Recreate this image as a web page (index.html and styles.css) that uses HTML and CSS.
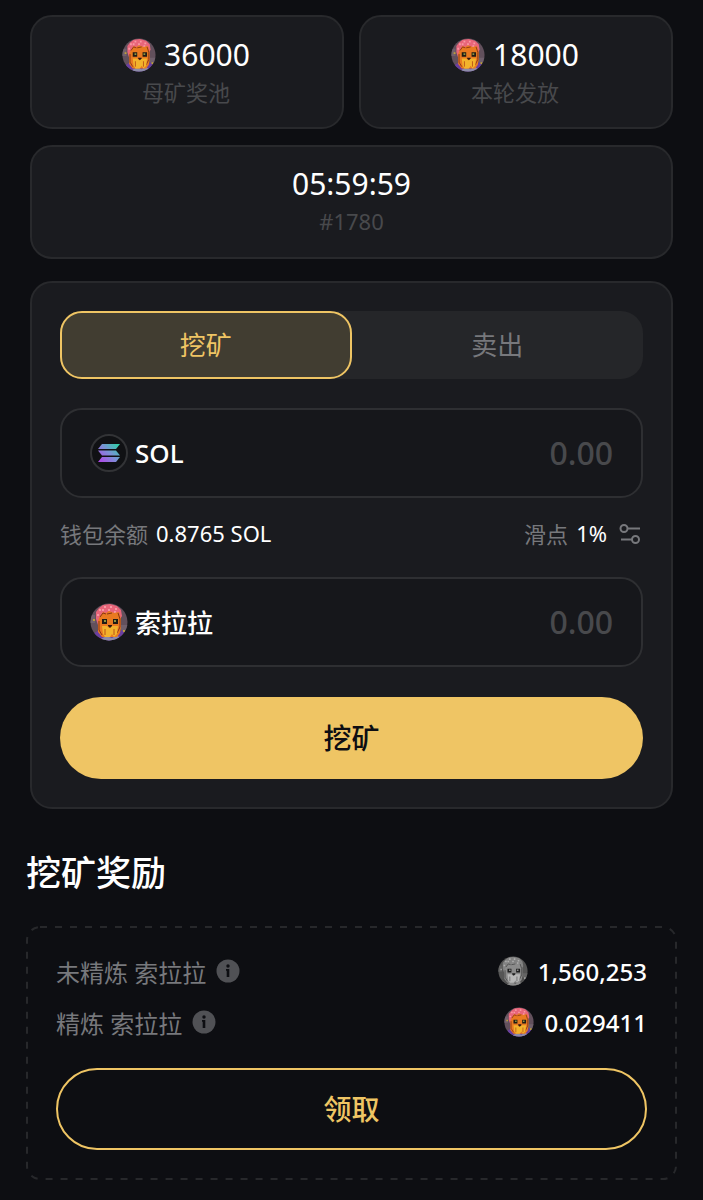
FILE: index.html
```html
<!DOCTYPE html>
<html lang="zh-CN">
<head>
<meta charset="utf-8">
<meta name="viewport" content="width=device-width, initial-scale=1">
<title>挖矿</title>
<link rel="stylesheet" href="styles.css">
</head>
<body>
<svg class="defs" aria-hidden="true">
  <defs>
    <linearGradient id="sol-fill" gradientUnits="userSpaceOnUse" x1="28" y1="10" x2="10" y2="28">
      <stop offset="0" stop-color="#2fd0a8"/>
      <stop offset="0.5" stop-color="#7c8fd6"/>
      <stop offset="1" stop-color="#b048e8"/>
    </linearGradient>
    <clipPath id="coin-clip"><circle cx="19" cy="19" r="18.5"/></clipPath>
    <symbol id="coin" viewBox="0 0 38 38">
      <g clip-path="url(#coin-clip)">
        <rect width="38" height="38" fill="#62505c"/>
        <path d="M0 12h5v8H0zM31 22h7v8h-7z" fill="#70606c"/>
        <path d="M3 31l6-4 5 3h12l6-3 4 5-8 8H8z" fill="#6a3fa0"/>
        <path d="M11 36l5-3 6 2 5-3 3 3-6 4H14z" fill="#8c8ba8"/>
        <path d="M6 16V9l3-4 4-3 7-1 7 2 4 4 1 6-3 5H9l-1 4z" fill="#e8657a"/>
        <path d="M9 7h2M14 4h2M20 4h2M25 6h2M7 12h2M12 7h2M18 7h2M24 9h2" stroke="#f798a2" stroke-width="2"/>
        <path d="M10 13l3-4 3 1 3-2 5 2 5-1 2 7v8l-1 6-3 4H12l-4-5V18z" fill="#e97a20"/>
        <path d="M10 14l3-4 3 1M28 10l2 6v8l-3 6M9 18v9l3 5M17 11l5-1" fill="none" stroke="#8a3516" stroke-width="1"/>
        <path d="M12 23h5l2 2 3-2h6l-1 8-3 3-2-3-2 3h-5l-2-3z" fill="#f3b32c"/>
        <path d="M15 26v6M24 26v6" stroke="#b95218" stroke-width="1"/>
        <path d="M12 16h5v5h-5zM23 16h5v5h-5z" fill="#211c15"/>
        <path d="M14 17h2v2h-2zM24 17h2v2h-2z" fill="#8f9440"/>
        <path d="M18 22h4v1l-2 2-2-2z" fill="#301812"/>
        <path d="M3 16h2v2H3zM33 27h2v2h-2z" fill="#bfa039"/>
      </g>
    </symbol>
    <symbol id="info" viewBox="0 0 24 24">
      <circle cx="12" cy="12" r="11.500" fill="#505155"/>
      <circle cx="12" cy="7" r="1.700" fill="#0d0e12"/>
      <path d="M10 10h3.300v8h-2.600v-6.200H10z" fill="#0d0e12"/>
    </symbol>
  </defs>
</svg>

<main class="page">
  <section class="stats">
    <div class="card">
      <div class="card-value"><svg class="coin" aria-hidden="true"><use href="#coin"/></svg>36000</div>
      <div class="card-label">母矿奖池</div>
    </div>
    <div class="card">
      <div class="card-value"><svg class="coin" aria-hidden="true"><use href="#coin"/></svg>18000</div>
      <div class="card-label">本轮发放</div>
    </div>
    <div class="card card-wide">
      <div class="card-value">05:59:59</div>
      <div class="card-label">#1780</div>
    </div>
  </section>

  <section class="panel">
    <div class="tabs" role="tablist">
      <button class="tab tab-active" type="button" role="tab" aria-selected="true">挖矿</button>
      <button class="tab" type="button" role="tab" aria-selected="false">卖出</button>
    </div>

    <div class="field">
      <label class="field-label" for="pay">
        <svg class="token" viewBox="0 0 38 38" aria-hidden="true">
          <circle cx="19" cy="19" r="18" fill="#101114" stroke="#323336" stroke-width="2"/>
          <g fill="url(#sol-fill)">
            <path d="M12 10h18l-4 5H8z"/>
            <path d="M8 16.500h18l4 5H12z"/>
            <path d="M12 23h18l-4 5H8z"/>
          </g>
        </svg>
        SOL
      </label>
      <input class="amount" id="pay" type="text" inputmode="decimal" placeholder="0.00">
    </div>

    <div class="meta">
      <div class="meta-group"><span class="muted">钱包余额</span><span>0.8765 SOL</span></div>
      <div class="meta-group">
        <span class="muted">滑点</span><span>1%</span>
        <button class="icon-button" type="button" aria-label="滑点设置">
          <svg class="sliders" viewBox="0 0 22 22" fill="none" stroke="#77787c" stroke-width="2" aria-hidden="true">
            <circle cx="5" cy="5.500" r="3.500"/><path d="M9 5.500h12"/>
            <circle cx="16.500" cy="16.500" r="3.500"/><path d="M2 16.500h11"/>
          </svg>
        </button>
      </div>
    </div>

    <div class="field">
      <label class="field-label" for="receive">
        <svg class="token" aria-hidden="true"><use href="#coin"/></svg>
        索拉拉
      </label>
      <input class="amount" id="receive" type="text" inputmode="decimal" placeholder="0.00">
    </div>

    <button class="action action-solid" type="button">挖矿</button>
  </section>

  <section class="rewards">
    <h2 class="rewards-title">挖矿奖励</h2>
    <div class="rewards-box">
      <svg class="dashes" aria-hidden="true"><rect class="dash-line" x="1" y="1" rx="13"/></svg>
      <div class="reward">
        <div class="reward-name">未精炼 索拉拉
          <button class="icon-button" type="button" aria-label="未精炼说明"><svg class="info" aria-hidden="true"><use href="#info"/></svg></button>
        </div>
        <div class="reward-value"><svg class="coin-small coin-grey" aria-hidden="true"><use href="#coin"/></svg>1,560,253</div>
      </div>
      <div class="reward">
        <div class="reward-name">精炼 索拉拉
          <button class="icon-button" type="button" aria-label="精炼说明"><svg class="info" aria-hidden="true"><use href="#info"/></svg></button>
        </div>
        <div class="reward-value"><svg class="coin-small" aria-hidden="true"><use href="#coin"/></svg>0.029411</div>
      </div>
      <button class="action action-outline" type="button">领取</button>
    </div>
  </section>
</main>
</body>
</html>
```
FILE: styles.css
```css
:root {
  --bg: #0d0e12;
  --card: #1a1b1f;
  --line: #28292c;
  --gold: #efc564;
  --muted: #77787c;
  --faint: #48494c;
}

* {
  box-sizing: border-box;
}

body {
  margin: 0;
  background: var(--bg);
  color: #fff;
  font-family: "Noto Sans", "Noto Sans CJK SC", sans-serif;
  font-size: 22px;
}

button,
input {
  margin: 0;
  padding: 0;
  border: 0;
  background: none;
  color: inherit;
  font: inherit;
}

button {
  cursor: pointer;
}

svg {
  display: block;
  flex: none;
}

.defs {
  position: absolute;
  width: 0;
  height: 0;
}

.page {
  padding: 15px 26px 20px;
}

.stats {
  display: grid;
  grid-template-columns: 1fr 1fr;
  gap: 16px 15px;
  margin: 0 4px 22px;
}

.card {
  padding: 18px 18px 18px 16px;
  border: 2px solid var(--line);
  border-radius: 22px;
  background: var(--card);
  text-align: center;
}

.card-wide {
  grid-column: 1 / -1;
  padding: 17px 16px 19px;
}

.card-value {
  display: flex;
  align-items: center;
  justify-content: center;
  gap: 8px;
  font-size: 30px;
  line-height: 40px;
}

.card-label {
  color: var(--faint);
  line-height: 34px;
}

.coin {
  width: 34px;
  height: 34px;
}

.panel {
  margin: 0 4px;
  padding: 28px;
  border: 2px solid var(--line);
  border-radius: 22px;
  background: var(--card);
}

.tabs {
  display: grid;
  grid-template-columns: 1fr 1fr;
  margin-bottom: 29px;
  border-radius: 22px;
  background: #252629;
}

.tab {
  height: 68px;
  padding-bottom: 2px;
  border-radius: 22px;
  color: var(--muted);
  font-size: 26px;
}

.tab-active {
  border: 2px solid var(--gold);
  background: #413d31;
  color: var(--gold);
}

.field {
  display: flex;
  align-items: center;
  justify-content: space-between;
  gap: 16px;
  height: 90px;
  padding: 0 28px;
  border: 2px solid #2e2f32;
  border-radius: 22px;
  background: #16171b;
}

.field-label {
  display: flex;
  align-items: center;
  gap: 7px;
  font-size: 26px;
  font-weight: 500;
  white-space: nowrap;
}

.token {
  width: 38px;
  height: 38px;
}

.amount {
  flex: 1;
  min-width: 0;
  padding-bottom: 2px;
  font-size: 32px;
  font-weight: 500;
  text-align: right;
  outline: 0;
}

.amount::placeholder {
  color: var(--faint);
  opacity: 1;
}

.meta {
  display: flex;
  align-items: center;
  justify-content: space-between;
  height: 79px;
  padding-bottom: 10px;
}

.meta-group {
  display: flex;
  align-items: center;
  gap: 8px;
}

.muted {
  color: var(--muted);
}

.icon-button {
  flex: none;
}

.sliders {
  width: 22px;
  height: 22px;
  margin: 2px 2px 0 4px;
}

.action {
  display: block;
  width: 100%;
  height: 82px;
  padding-bottom: 2px;
  border-radius: 41px;
  font-size: 28px;
  font-weight: 500;
}

.action-solid {
  margin-top: 30px;
  background: var(--gold);
  color: #0d0e12;
}

.action-outline {
  margin-top: 20px;
  border: 2px solid var(--gold);
  color: var(--gold);
}

.rewards-title {
  margin: 40px 0 29px;
  font-size: 35px;
  font-weight: 500;
  line-height: 48px;
}

.rewards-box {
  position: relative;
  padding: 20px 30px 30px;
}

.dashes {
  position: absolute;
  inset: 0;
  width: 100%;
  height: 100%;
  pointer-events: none;
}

.dash-line {
  width: calc(100% - 2px);
  height: calc(100% - 2px);
  fill: none;
  stroke: #27282b;
  stroke-width: 2px;
  stroke-dasharray: 7px 8px;
}

.reward {
  display: flex;
  align-items: center;
  justify-content: space-between;
  height: 51px;
  padding-bottom: 1px;
}

.reward-name {
  display: flex;
  align-items: center;
  gap: 10px;
  color: var(--muted);
  font-size: 24px;
}

.info {
  width: 24px;
  height: 24px;
}

.reward-value {
  display: flex;
  align-items: center;
  gap: 10px;
  font-size: 24px;
  font-weight: 500;
}

.coin-small {
  width: 30px;
  height: 30px;
}

.coin-grey {
  filter: grayscale(1);
}
```
